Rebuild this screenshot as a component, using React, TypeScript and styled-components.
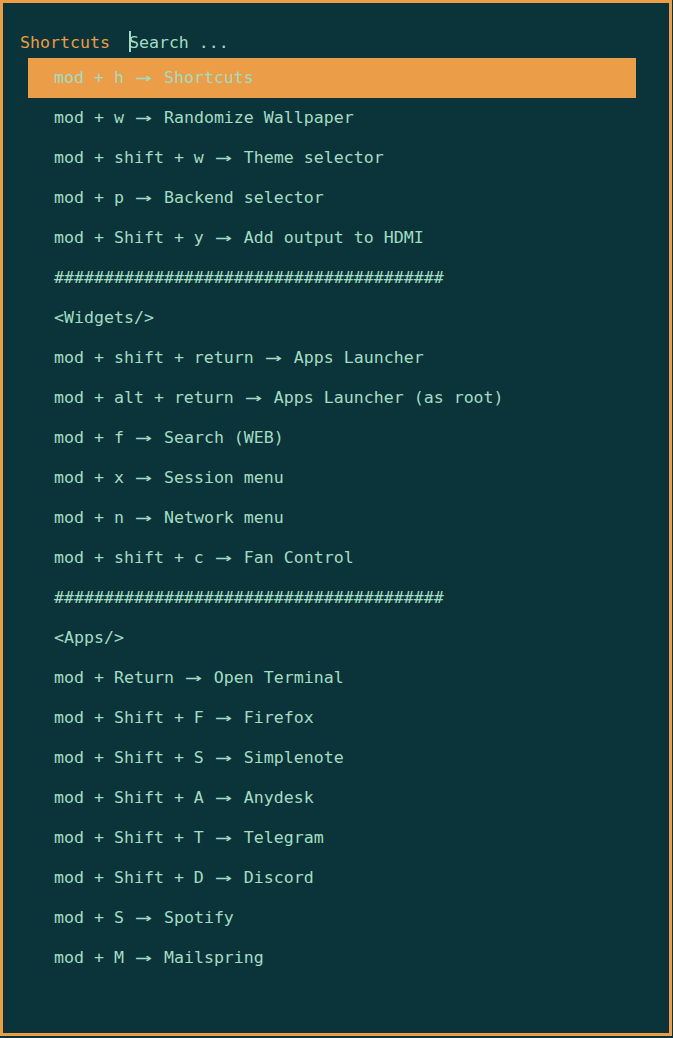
import React from "react";
import styled, { createGlobalStyle } from "styled-components";

const Global = createGlobalStyle`
  html, body { margin: 0; padding: 0; background: #0a3439; }
  body { width: 673px; height: 1038px; overflow: hidden; }
`;

const C = {
  bg: "#0a3439",
  fg: "#a3dcc3",
  accent: "#eb9d48",
};

const Window = styled.div`
  box-sizing: border-box;
  width: 672px;
  height: 1036px;
  border: 3px solid ${C.accent};
  background: ${C.bg};
  font-family: "DejaVu Sans Mono", "Liberation Mono", monospace;
  font-size: 16.6px;
  color: ${C.fg};
  padding: 29px 33px 0 17px;
  display: flex;
  flex-direction: column;
  gap: 6px;
`;

const InputBar = styled.div`
  display: flex;
  align-items: center;
  height: 20px;
  gap: 19px;
`;

const Prompt = styled.span`
  color: ${C.accent};
  white-space: pre;
`;

const Entry = styled.span`
  position: relative;
  white-space: pre;
  color: ${C.fg};
`;

const Caret = styled.span`
  position: absolute;
  left: 0;
  top: -2px;
  width: 2px;
  height: 21px;
  background: ${C.fg};
`;

const List = styled.div`
  display: flex;
  flex-direction: column;
  margin-left: 8px;
`;

const Row = styled.div<{ $selected?: boolean }>`
  height: 40px;
  display: flex;
  align-items: center;
  padding-left: 26px;
  padding-bottom: 1px;
  box-sizing: border-box;
  white-space: pre;
  background: ${(p) => (p.$selected ? C.accent : "transparent")};
  color: ${C.fg};
`;

const Arrow = styled.span`
  display: inline-block;
  width: 20px;
  text-align: center;
  transform: scaleX(1.7);
`;

const items = [
  "mod + h -> Shortcuts",
  "mod + w -> Randomize Wallpaper",
  "mod + shift + w -> Theme selector",
  "mod + p -> Backend selector",
  "mod + Shift + y -> Add output to HDMI",
  "#######################################",
  "<Widgets/>",
  "mod + shift + return -> Apps Launcher",
  "mod + alt + return -> Apps Launcher (as root)",
  "mod + f -> Search (WEB)",
  "mod + x -> Session menu",
  "mod + n -> Network menu",
  "mod + shift + c -> Fan Control",
  "#######################################",
  "<Apps/>",
  "mod + Return -> Open Terminal",
  "mod + Shift + F -> Firefox",
  "mod + Shift + S -> Simplenote",
  "mod + Shift + A -> Anydesk",
  "mod + Shift + T -> Telegram",
  "mod + Shift + D -> Discord",
  "mod + S -> Spotify",
  "mod + M -> Mailspring",
];

function renderText(t: string) {
  if (t.includes("->")) {
    const [a, b] = t.split("->");
    return (
      <>
        {a}
        <Arrow>→</Arrow>
        {b}
      </>
    );
  }
  return t;
}

export default function App() {
  return (
    <>
      <Global />
      <Window>
        <InputBar>
          <Prompt>Shortcuts</Prompt>
          <Entry>
            Search ...
            <Caret />
          </Entry>
        </InputBar>
        <List>
          {items.map((t, i) => (
            <Row key={i} $selected={i === 0}>
              {renderText(t)}
            </Row>
          ))}
        </List>
      </Window>
    </>
  );
}
